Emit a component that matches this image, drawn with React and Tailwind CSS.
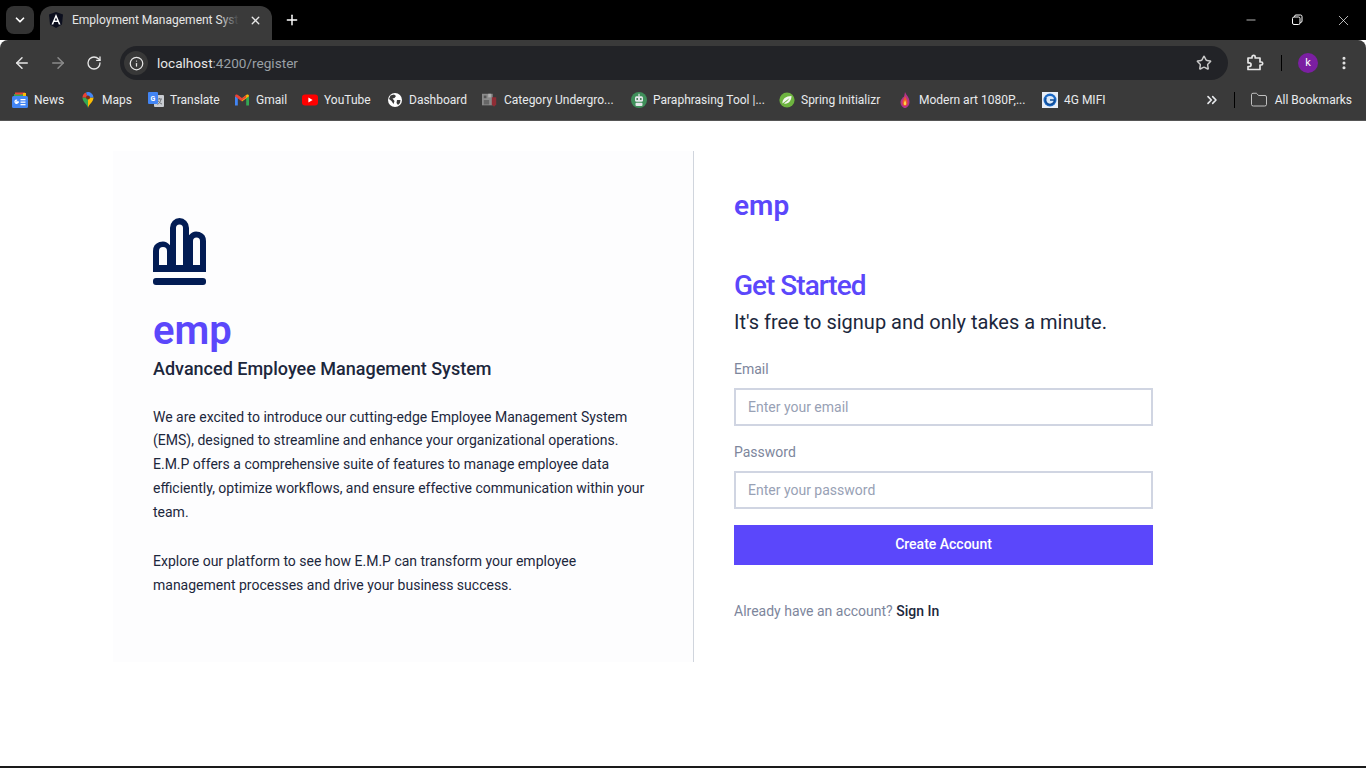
import React from 'react';
import { ChevronDown, X, Plus, ArrowLeft, ArrowRight, RotateCw, Info, Star, MoreVertical, ChevronsRight, Folder, Minus } from 'lucide-react';

const uiFont = "font-['Roboto',sans-serif]";

const NewsIcon = () => (
  <svg width="16" height="16" viewBox="0 0 16 16">
    <path d="M2 2 L14 2 L14 6 L2 6Z" fill="#34a853" />
    <path d="M3 0.5 L13 0.5 L13 2.5 L3 2.5Z" fill="#ea4335" />
    <rect x="11" y="1" width="3" height="3" fill="#fbbc04" />
    <rect x="0" y="4" width="16" height="12" rx="1.5" fill="#4285f4" />
    <rect x="8.5" y="7" width="5" height="1.3" fill="#fff" />
    <rect x="8.5" y="9.5" width="5" height="1.3" fill="#fff" />
    <rect x="8.5" y="12" width="5" height="1.3" fill="#fff" />
    <path d="M6.8 9.9 H4.5 V10.8 H5.7 A1.6 1.6 0 1 1 5.2 8.2" fill="none" stroke="#fff" strokeWidth="1.2" />
  </svg>
);

const MapsIcon = () => (
  <svg width="16" height="16" viewBox="0 0 16 16">
    <path d="M8 16 C7 12 2.5 10 2.5 5.5 L8 5.5Z" fill="#34a853" />
    <path d="M8 16 C9 12 13.5 10 13.5 5.5 L8 5.5Z" fill="#fbbc04" />
    <path d="M2.5 5.5 A5.5 5.5 0 0 1 6 0.4 L8 5.5Z" fill="#ea4335" />
    <path d="M6 0.4 A5.5 5.5 0 0 1 13.5 5.5 L8 5.5Z" fill="#4285f4" />
    <circle cx="8" cy="5.5" r="2" fill="#7c2d12" />
  </svg>
);

const TranslateIcon = () => (
  <svg width="16" height="16" viewBox="0 0 16 16">
    <rect x="6" y="3" width="10" height="12" rx="1" fill="#c9ccd1" />
    <path d="M9 7 H14 M11.5 6 V7 M13 7 C12.5 10 11 11.5 9.5 12.5 M10 8.5 C11 10.5 12.5 11.5 14 12" stroke="#70757a" strokeWidth="1" fill="none" />
    <rect x="0" y="0" width="10" height="12" rx="1" fill="#4285f4" />
    <text x="5" y="8.5" textAnchor="middle" fontSize="7" fontWeight="700" fill="#fff" fontFamily="Roboto, sans-serif">G</text>
  </svg>
);

const GmailIcon = () => (
  <svg width="16" height="16" viewBox="0 0 16 16">
    <path d="M1 13.5 V4 L3.8 6 V13.5Z" fill="#4285f4" />
    <path d="M15 13.5 V4 L12.2 6 V13.5Z" fill="#34a853" />
    <path d="M1 4 C1 2.5 2.5 2 3.5 2.7 L8 6.2 L8 9.4 L1 4.3Z" fill="#ea4335" />
    <path d="M15 4 C15 2.5 13.5 2 12.5 2.7 L8 6.2 L8 9.4 L15 4.3Z" fill="#fbbc04" />
    <path d="M3.8 5.5 L8 8.6 L12.2 5.5 L12.2 3.3 L8 6.2 L3.8 3.3Z" fill="#ea4335" />
  </svg>
);

const YoutubeIcon = () => (
  <svg width="16" height="16" viewBox="0 0 16 16">
    <rect x="0" y="2.5" width="16" height="11" rx="3" fill="#f00" />
    <path d="M6.4 5.6 L10.6 8 L6.4 10.4Z" fill="#fff" />
  </svg>
);

const GlobeIcon = () => (
  <svg width="16" height="16" viewBox="0 0 16 16">
    <circle cx="8" cy="8" r="7" fill="#fff" />
    <path d="M3.5 3.5 L7 2.5 L9 4 L7.5 6 L5.5 6.5 L7.5 9 L6.5 12 L4.5 9 L2 7Z" fill="#3a3a3a" />
    <path d="M10 8 L13.5 8 L13 11 L11 13 L9.5 11Z" fill="#3a3a3a" />
  </svg>
);

const CategoryIcon = () => (
  <svg width="18" height="16" viewBox="0 0 18 16">
    <rect x="0" y="1" width="12" height="13" fill="#8b8b8b" />
    <rect x="2" y="3" width="3" height="3" fill="#555" />
    <rect x="7" y="1" width="3" height="4" fill="#b0b0b0" />
    <rect x="2" y="8" width="6" height="5" fill="#666" />
    <path d="M11 5 H16 V13 L13.5 15.5 L11 13Z" fill="#8f2d35" />
  </svg>
);

const BotIcon = () => (
  <svg width="16" height="16" viewBox="0 0 16 16">
    <circle cx="8" cy="8" r="8" fill="#3f8f5a" />
    <rect x="7.4" y="1.8" width="1.2" height="2.5" fill="#e5e7eb" />
    <rect x="4" y="4.2" width="8" height="5.6" rx="1.5" fill="#e5e7eb" />
    <circle cx="6.2" cy="7" r="0.9" fill="#2f6e46" />
    <circle cx="9.8" cy="7" r="0.9" fill="#2f6e46" />
    <rect x="4.5" y="10.8" width="7" height="3.2" rx="1" fill="#e5e7eb" />
  </svg>
);

const SpringIcon = () => (
  <svg width="16" height="16" viewBox="0 0 16 16">
    <circle cx="8" cy="8" r="7.6" fill="#6db33f" />
    <path d="M3.5 11.5 C3 7 7 4 12.5 4 C12.5 9 9 12.5 5 11.5 C7 10 9 8.5 10.5 6" fill="#f4f7ef" />
  </svg>
);

const FlameIcon = () => (
  <svg width="16" height="16" viewBox="0 0 16 16">
    <path d="M8 0 C9 3 12.5 5 12.5 10 C12.5 13.5 10 16 8 16 C6 16 3.5 13.5 3.5 10 C3.5 7.5 5.5 7 6 5 C7 6 7.5 3 8 0Z" fill="#b5338a" />
    <path d="M8 4 C9 6.5 10.5 8 10.5 10.5 C10.5 12.5 9.5 14 8 14 C6.5 14 5.5 12.5 5.5 10.5 C5.5 8 7.5 7 8 4Z" fill="#ef5a2a" />
    <path d="M8 8 C8.7 9.5 9.2 10.5 9.2 11.5 C9.2 12.5 8.7 13 8 13 C7.3 13 6.8 12.5 6.8 11.5 C6.8 10.5 7.6 9.5 8 8Z" fill="#fcd34d" />
  </svg>
);

const MifiIcon = () => (
  <svg width="16" height="16" viewBox="0 0 16 16">
    <rect width="16" height="16" fill="#e8eef7" />
    <circle cx="8" cy="8" r="6.5" fill="#1c69c4" />
    <circle cx="8" cy="8" r="4" fill="#dbe8f7" />
    <path d="M8 8 H12.5 A4.5 4.5 0 0 1 8 12.5 A4.5 4.5 0 0 1 4 6" fill="none" stroke="#0f4c97" strokeWidth="1.6" />
  </svg>
);

const ExtensionIcon = () => (
  <svg width="18" height="18" viewBox="0 0 18 18" fill="none" stroke="#e6e6e6" strokeWidth="1.7" strokeLinejoin="round" className="ml-[18px]">
    <path d="M2 4 H6 V3 A1.6 1.6 0 0 1 9.2 3 V4 H14 V8 H15.2 A1.5 1.5 0 0 1 15.2 11 H14 V15.5 H2 V12.5 H3.2 A1.8 1.8 0 0 0 3.2 8.8 H2Z" />
  </svg>
);

const bookmarks = [
  { label: 'News', icon: <NewsIcon />, width: 'w-[68px]' },
  { label: 'Maps', icon: <MapsIcon />, width: 'w-[68px]' },
  { label: 'Translate', icon: <TranslateIcon />, width: 'w-[86px]' },
  { label: 'Gmail', icon: <GmailIcon />, width: 'w-[68px]' },
  { label: 'YouTube', icon: <YoutubeIcon />, width: 'w-[85px]' },
  { label: 'Dashboard', icon: <GlobeIcon />, width: 'w-[95px]' },
  { label: 'Category Undergro...', icon: <CategoryIcon />, width: 'w-[149px]' },
  { label: 'Paraphrasing Tool |...', icon: <BotIcon />, width: 'w-[148px]' },
  { label: 'Spring Initializr', icon: <SpringIcon />, width: 'w-[118px]' },
  { label: 'Modern art 1080P,...', icon: <FlameIcon />, width: 'w-[145px]' },
  { label: '4G MIFI', icon: <MifiIcon />, width: 'w-[80px]' },
];

function TabStrip() {
  return (
    <div className="flex h-10 bg-black text-white">
      <div className="ml-[6px] mt-[6px] flex h-[28px] w-[28px] items-center justify-center rounded-lg bg-[#333333]">
        <ChevronDown size={14} strokeWidth={3} />
      </div>
      <div className="ml-[6px] mt-[6px] flex h-[34px] w-[232px] items-center rounded-t-xl bg-[#3a3a3a] pb-[6px] pl-2">
        <svg width="16" height="16" viewBox="0 0 16 16" className="shrink-0">
          <path d="M8 0 L15 2.5 L14 12.5 L8 16 L2 12.5 L1 2.5Z" fill="#0c0f1e" />
          <path d="M8 2 L12.5 12.5 H10.8 L9.9 10 H6.1 L5.2 12.5 H3.5Z M8 5.5 L6.8 8.6 H9.2Z" fill="#fff" fillRule="evenodd" />
        </svg>
        <div className="relative ml-2 w-[167px] overflow-hidden">
          <span className={`block whitespace-nowrap text-[12px] text-[#e6e6e6] ${uiFont}`}>Employment Management Syst</span>
          <div className="absolute inset-y-0 right-0 w-5 bg-gradient-to-r from-transparent to-[#3a3a3a]" />
        </div>
        <X size={13} strokeWidth={2.5} className="ml-[10px] shrink-0 text-[#e8e8e8]" />
      </div>
      <div className="ml-[12px] flex h-10 items-center">
        <Plus size={16} strokeWidth={2.2} />
      </div>
      <div className="ml-auto flex h-10 items-center">
        <div className="flex w-[46px] justify-center"><Minus size={14} strokeWidth={1.2} /></div>
        <div className="flex w-[46px] justify-center">
          <svg width="12" height="12" viewBox="0 0 12 12" fill="none" stroke="#fff" strokeWidth="1">
            <rect x="1.5" y="3" width="7.5" height="7.5" rx="1.5" />
            <path d="M3.5 3 V2.5 A1.5 1.5 0 0 1 5 1 H9.5 A1.5 1.5 0 0 1 11 2.5 V7 A1.5 1.5 0 0 1 9.5 8.5 H9" />
          </svg>
        </div>
        <div className="flex w-[46px] justify-center"><X size={17} strokeWidth={1} /></div>
      </div>
    </div>
  );
}

function Toolbar() {
  return (
    <div className="flex h-10 items-center rounded-t-lg bg-[#3a3a3a] pt-[6px] text-[#e6e6e6]">
      <ArrowLeft size={18} strokeWidth={2} className="ml-[13px]" />
      <ArrowRight size={18} strokeWidth={2} className="ml-[18px] text-[#8a8a8a]" />
      <RotateCw size={16} strokeWidth={2} className="ml-[19px]" />
      <div className="ml-[18px] flex h-[34px] w-[1108px] items-center rounded-full bg-[#222327]">
        <div className="ml-[4px] flex h-[24px] w-[24px] items-center justify-center rounded-full bg-[#383838]">
          <Info size={15} strokeWidth={2} />
        </div>
        <span className={`ml-[9px] text-[13.6px] text-[#e6e6e6] ${uiFont}`}>
          localhost<span className="text-[#9aa0a6]">:4200/register</span>
        </span>
        <Star size={16} strokeWidth={2.2} className="ml-auto mr-[16px] text-[#c8c8c8]" />
      </div>
      <ExtensionIcon />
      <div className="ml-[17px] h-4 w-px bg-black" />
      <div className={`ml-[16px] flex h-5 w-5 items-center justify-center rounded-full bg-[#7b1fa2] text-[11px] text-white ${uiFont}`}>k</div>
      <MoreVertical size={16} strokeWidth={2.6} className="ml-[18px]" />
    </div>
  );
}

function BookmarksBar() {
  return (
    <div className={`flex h-[41px] items-center border-b border-[#555555] bg-[#3a3a3a] pl-3 pr-[14px] text-[12px] text-[#e8eaed] ${uiFont}`}>
      {bookmarks.map((b) => (
        <div key={b.label} className={`flex items-center gap-[6px] whitespace-nowrap ${b.width}`}>
          <span className="flex w-4 shrink-0">{b.icon}</span>
          <span>{b.label}</span>
        </div>
      ))}
      <div className="ml-auto flex items-center">
        <ChevronsRight size={16} strokeWidth={2.4} />
        <div className="ml-[14px] h-4 w-px bg-black" />
        <Folder size={18} strokeWidth={1.3} className="ml-[15px] text-[#c4c4c4]" />
        <span className="ml-[7px] whitespace-nowrap">All Bookmarks</span>
      </div>
    </div>
  );
}

function Logo() {
  return (
    <svg width="54" height="68" viewBox="0 0 54 68" className="block">
      <g fill="#021c54">
        <path fillRule="evenodd" d="M0 54 V33 A9.5 9.5 0 0 1 17 27.2 V10 A9.5 10 0 0 1 36 10 V17.2 A9.5 9.5 0 0 1 53 23 V54Z M6 47 H14 V33 A4 4 0 0 0 6 33Z M23 47 H30 V10 A3.5 3.5 0 0 0 23 10Z M40 47 H47 V23 A3.5 3.5 0 0 0 40 23Z" />
        <rect x="0" y="60" width="53" height="7" rx="3" />
      </g>
    </svg>
  );
}

function Field({ label, placeholder, type }) {
  return (
    <div>
      <label className="mb-[9px] block text-[14px] leading-[20px] text-[#7d869c]">{label}</label>
      <input
        type={type}
        placeholder={placeholder}
        className="block h-[38px] w-full border-2 border-[#d0d5e2] bg-white px-3 text-[14px] outline-none placeholder:text-[#98a1b5]"
      />
    </div>
  );
}

function App() {
  return (
    <div className="flex h-[768px] flex-col overflow-hidden bg-white font-['Roboto',sans-serif]">
      <TabStrip />
      <Toolbar />
      <BookmarksBar />
      <main className="flex-1 pl-[113px] pt-[30px]">
        <div className="flex h-[511px]">
          <section className="h-full w-[581px] border-r border-[#d0d5dd] bg-[#fdfdfe] pl-10 pt-[67px]">
            <Logo />
            <h1 className="mt-[22px] text-[40px] font-semibold leading-[46px] text-[#5b47fb]">emp</h1>
            <h2 className="mt-[3px] text-[18px] font-medium leading-[24px] text-[#1c273c]">Advanced Employee Management System</h2>
            <p className="mt-[24.5px] w-[500px] text-[14px] leading-[23.8px] text-[#1c273c]">
              We are excited to introduce our cutting-edge Employee Management System (EMS), designed to streamline and enhance your organizational operations. E.M.P offers a comprehensive suite of features to manage employee data efficiently, optimize workflows, and ensure effective communication within your team.
            </p>
            <p className="mt-[25.4px] w-[500px] text-[14px] leading-[23.8px] text-[#1c273c]">
              Explore our platform to see how E.M.P can transform your employee management processes and drive your business success.
            </p>
          </section>
          <section className="w-[460px] pl-10 pt-[37px]">
            <div className="text-[28px] font-semibold leading-[36px] text-[#5b47fb]">emp</div>
            <h2 className="mt-[44px] text-[28px] font-medium leading-[36px] tracking-[-1px] text-[#5b47fb]">Get Started</h2>
            <p className="mt-[3px] text-[20px] leading-[30px] text-[#1c273c]">It's free to signup and only takes a minute.</p>
            <div className="mt-[22px] flex w-[419px] flex-col gap-4">
              <Field label="Email" placeholder="Enter your email" type="email" />
              <Field label="Password" placeholder="Enter your password" type="password" />
            </div>
            <button className="mt-[16px] h-10 w-[419px] bg-[#5b47fb] pb-[2px] text-[14px] font-medium text-white">Create Account</button>
            <p className="mt-[36px] text-[14px] leading-[20px] text-[#7d869c]">
              Already have an account? <a className="font-medium text-[#1c273c]">Sign In</a>
            </p>
          </section>
        </div>
      </main>
      <div className="h-[2px] bg-[#1a1a1a]" />
    </div>
  );
}

export default App;
